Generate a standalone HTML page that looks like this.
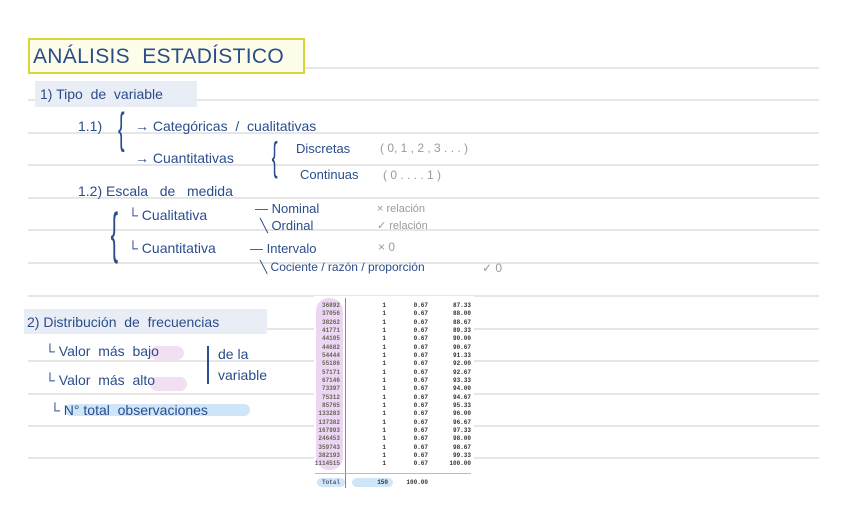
<!DOCTYPE html>
<html><head><meta charset="utf-8"><style>
body{margin:0;width:848px;height:530px;background:#fff;position:relative;overflow:hidden;font-family:"Liberation Sans",sans-serif;color:#2b4d8c}
.l{position:absolute;left:28px;width:791px;height:1.5px;background:#e6e6e6}
.t{position:absolute;white-space:nowrap;font-size:14px}
.g{color:#9a9a9a;font-size:12px}
.tb{position:absolute;font-family:"Liberation Mono",monospace;font-size:6px;color:#333;font-weight:bold;text-align:right}
</style></head><body>
<div class="l" style="top:67px"></div><div class="l" style="top:99px"></div><div class="l" style="top:132px"></div><div class="l" style="top:164px"></div><div class="l" style="top:197px"></div><div class="l" style="top:229px"></div><div class="l" style="top:262px"></div><div class="l" style="top:295px"></div><div class="l" style="top:328px"></div><div class="l" style="top:360px"></div><div class="l" style="top:393px"></div><div class="l" style="top:425px"></div><div class="l" style="top:457px"></div>

<div style="position:absolute;left:28px;top:38px;width:273px;height:32px;border:2px solid #d6d63a;background:#fdfdea"></div>
<div class="t" style="left:33px;top:45px;font-size:21px;letter-spacing:0.3px">ANÁLISIS&nbsp; ESTADÍSTICO</div>
<div style="position:absolute;left:35px;top:81px;width:162px;height:26px;background:#e9edf5"></div>
<div class="t" style="left:40px;top:86px">1) Tipo&nbsp; de&nbsp; variable</div>
<div class="t" style="left:78px;top:118px">1.1)</div>
<div class="t" style="left:114px;top:104px;font-size:44px;font-weight:100;transform:scaleX(.45)">{</div>
<div class="t" style="left:135px;top:118px">→ Categóricas&nbsp; /&nbsp; cualitativas</div>
<div class="t" style="left:135px;top:150px">→ Cuantitativas</div>
<div class="t" style="left:268px;top:135px;font-size:40px;font-weight:100;transform:scaleX(.45)">{</div>
<div class="t" style="left:296px;top:141px;font-size:13px">Discretas</div>
<div class="t g" style="left:380px;top:141px">( 0, 1 , 2 , 3 . . . )</div>
<div class="t" style="left:300px;top:167px;font-size:13px">Continuas</div>
<div class="t g" style="left:383px;top:168px">( 0 . . . . 1 )</div>
<div class="t" style="left:78px;top:183px">1.2) Escala&nbsp;&nbsp; de&nbsp;&nbsp; medida</div>
<div class="t" style="left:105px;top:200px;font-size:56px;font-weight:100;transform:scaleX(.4)">{</div>
<div class="t" style="left:128px;top:207px">└ Cualitativa</div>
<div class="t" style="left:255px;top:201px;font-size:13px">— Nominal</div>
<div class="t" style="left:260px;top:218px;font-size:13px">╲ Ordinal</div>
<div class="t g" style="left:377px;top:203px;font-size:11px">× relación</div>
<div class="t g" style="left:377px;top:219px;font-size:11px">✓ relación</div>
<div class="t" style="left:128px;top:240px">└ Cuantitativa</div>
<div class="t" style="left:250px;top:241px;font-size:13px">— Intervalo</div>
<div class="t g" style="left:378px;top:240px">× 0</div>
<div class="t" style="left:260px;top:260px;font-size:12px">╲ Cociente / razón / proporción</div>
<div class="t g" style="left:482px;top:261px">✓ 0</div>

<div style="position:absolute;left:24px;top:309px;width:243px;height:25px;background:#e9edf5"></div>
<div class="t" style="left:27px;top:314px">2) Distribución&nbsp; de&nbsp; frecuencias</div>
<div style="position:absolute;left:150px;top:346px;width:34px;height:14px;border-radius:7px;background:#f3dff2"></div>
<div style="position:absolute;left:150px;top:377px;width:37px;height:14px;border-radius:7px;background:#f3dff2"></div>
<div class="t" style="left:45px;top:343px">└ Valor&nbsp; más&nbsp; bajo</div>
<div class="t" style="left:45px;top:372px">└ Valor&nbsp; más&nbsp; alto</div>
<div style="position:absolute;left:207px;top:346px;width:1.5px;height:38px;background:#2b4d8c"></div>
<div class="t" style="left:218px;top:346px">de la</div>
<div class="t" style="left:218px;top:367px">variable</div>
<div style="position:absolute;left:65px;top:404px;width:185px;height:12px;border-radius:6px;background:#cfe6f8"></div>
<div class="t" style="left:50px;top:402px">└ N° total&nbsp; observaciones</div>

<div style="position:absolute;left:314px;top:296px;width:160px;height:195px;background:#fff"></div>
<div style="position:absolute;left:316px;top:298px;width:27px;height:172px;border-radius:13px;background:#ecd6f3"></div>
<div style="position:absolute;left:345px;top:298px;width:1px;height:190px;background:#888"></div>
<div style="position:absolute;left:315px;top:473px;width:156px;height:1px;background:#bbb"></div>
<div style="position:absolute;left:317px;top:478px;width:28px;height:9px;border-radius:5px;background:#cfe6f8"></div>
<div style="position:absolute;left:352px;top:478px;width:41px;height:9px;border-radius:5px;background:#cfe6f8"></div>
<div class="tb" style="left:300px;top:479px;width:40px;color:#557">Total</div>
<div class="tb" style="left:350px;top:479px;width:38px">150</div>
<div class="tb" style="left:390px;top:479px;width:38px">100.00</div>
<div class="tb" style="left:300px;top:302px;width:40px;line-height:8.33px;color:#665">36892<br>37056<br>38262<br>41771<br>44105<br>44682<br>54444<br>55186<br>57171<br>67146<br>73397<br>75312<br>85765<br>133283<br>137382<br>167993<br>246453<br>359743<br>382193<br>1114515</div>
<div class="tb" style="left:350px;top:302px;width:36px;line-height:8.33px">1<br>1<br>1<br>1<br>1<br>1<br>1<br>1<br>1<br>1<br>1<br>1<br>1<br>1<br>1<br>1<br>1<br>1<br>1<br>1</div>
<div class="tb" style="left:390px;top:302px;width:38px;line-height:8.33px">0.67<br>0.67<br>0.67<br>0.67<br>0.67<br>0.67<br>0.67<br>0.67<br>0.67<br>0.67<br>0.67<br>0.67<br>0.67<br>0.67<br>0.67<br>0.67<br>0.67<br>0.67<br>0.67<br>0.67</div>
<div class="tb" style="left:430px;top:302px;width:41px;line-height:8.33px">87.33<br>88.00<br>88.67<br>89.33<br>90.00<br>90.67<br>91.33<br>92.00<br>92.67<br>93.33<br>94.00<br>94.67<br>95.33<br>96.00<br>96.67<br>97.33<br>98.00<br>98.67<br>99.33<br>100.00</div>
</body></html>
